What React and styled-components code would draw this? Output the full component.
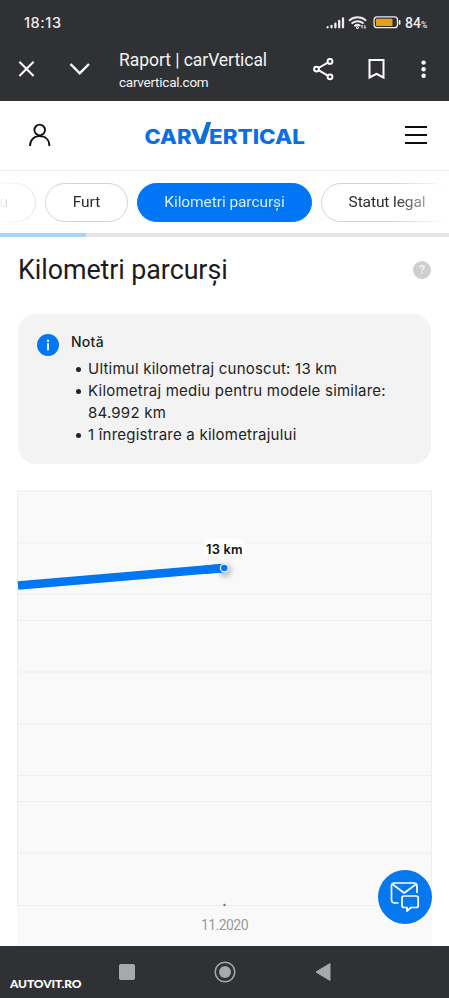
import React from "react";
import styled, { createGlobalStyle } from "styled-components";

const GlobalStyle = createGlobalStyle`
  * {
    box-sizing: border-box;
  }

  body {
    margin: 0;
    background: #fff;
    overflow: hidden;
  }
`;

// Styled components
const Screen = styled.div`
  display: flex;
  flex-direction: column;
  width: 449px;
  height: 998px;
  overflow: hidden;
  background: #fff;
  font-family: Roboto, "Liberation Sans", sans-serif;
`;

const StatusBar = styled.div`
  display: flex;
  align-items: center;
  height: 45px;
  flex-shrink: 0;
  padding: 0 20px 0 24px;
  background: #303135;
  color: #ededef;
`;

const Clock = styled.span`
  flex: 1;
  font-family: Inter, sans-serif;
  font-size: 14.5px;
  font-weight: 500;
  letter-spacing: 0.6px;
`;

const BatteryLevel = styled.span`
  width: 24px;
  margin-left: 4px;
  font-size: 14px;
  font-weight: 500;
  white-space: nowrap;

  small {
    font-size: 8.5px;
  }
`;

const BrowserBar = styled.div`
  display: flex;
  align-items: center;
  height: 56px;
  flex-shrink: 0;
  padding: 0 22px 8px 18px;
  background: #303135;
  color: #fff;
`;

const PageTitle = styled.div`
  flex: 1;
  margin: 4px 0 0 28px;
  white-space: nowrap;
`;

const TitleText = styled.div`
  font-size: 17.5px;
  line-height: 21px;
  letter-spacing: -0.05px;
  color: #f4f4f5;
`;

const UrlText = styled.div`
  font-size: 13.5px;
  line-height: 22px;
  letter-spacing: -0.25px;
  color: #f4f4f5;
`;

const BrowserActions = styled.div`
  display: flex;
  align-items: center;
`;

const SiteHeader = styled.header`
  display: flex;
  align-items: center;
  justify-content: space-between;
  height: 70px;
  flex-shrink: 0;
  padding: 0 22px 2px 27px;
  border-bottom: 1px solid #eeeeee;
`;

const Logo = styled.svg`
  margin: 0 7px 2px 0;
  font-family: Inter, sans-serif;
  font-size: 20px;
  font-weight: 800;
  fill: #0b6fe0;
`;

const Tabs = styled.nav`
  display: flex;
  gap: 9px;
  height: 62px;
  flex-shrink: 0;
  padding-top: 12px;
  overflow: hidden;
  mask-image: linear-gradient(
    90deg,
    rgba(0, 0, 0, 0.05),
    #000 54px,
    #000 394px,
    transparent 449px
  );
`;

const Tab = styled.div`
  display: flex;
  align-items: center;
  justify-content: ${(props) => (props.$clipped ? "flex-end" : "center")};
  width: ${(props) => props.$width}px;
  height: 39px;
  flex-shrink: 0;
  margin-left: ${(props) => (props.$clipped ? "-64px" : "0")};
  padding: 0 27px 1px;
  border: 1px solid ${(props) => (props.$active ? "#0076f6" : "#d4d4d6")};
  border-radius: 20px;
  background: ${(props) => (props.$active ? "#0076f6" : "#fff")};
  color: ${(props) => (props.$active ? "#d8ecff" : "#2c2c2c")};
  font-size: 15.5px;
  font-weight: 400;
  letter-spacing: ${(props) => props.$spacing || 0}px;
  white-space: nowrap;
`;

const ProgressTrack = styled.div`
  height: 4px;
  flex-shrink: 0;
  background: #e4e4e4;
`;

const ProgressFill = styled.div`
  width: 86px;
  height: 100%;
  background: #a6d5fb;
`;

const Content = styled.main`
  flex: 1;
  min-height: 0;
  padding: 0 18px 0 17px;
  overflow: hidden;
`;

const HeadingRow = styled.div`
  display: flex;
  align-items: center;
  justify-content: space-between;
  height: 65px;
`;

const Heading = styled.h1`
  margin: 1px 0 0 1px;
  font-size: 26.8px;
  font-weight: 400;
  line-height: 32px;
  letter-spacing: -0.05px;
  color: #1b1b1d;
`;

const HelpBadge = styled.span`
  display: flex;
  align-items: center;
  justify-content: center;
  width: 18px;
  height: 18px;
  border-radius: 50%;
  background: #cfcfcf;
  color: #f3f3f3;
  font-size: 13px;
  font-weight: 500;
`;

const NoteCard = styled.section`
  display: flex;
  height: 150px;
  margin: 12px 0 0 1px;
  padding: 17px 20px 17px 19px;
  border-radius: 18px;
  background: #f3f3f3;
  font-family: Inter, sans-serif;
  color: #222225;
`;

const NoteBody = styled.div`
  margin-left: 12px;
  white-space: nowrap;
`;

const NoteTitle = styled.div`
  font-size: 14px;
  font-weight: 500;
  line-height: 22px;
  letter-spacing: 0.25px;
`;

const NoteList = styled.ul`
  margin: 5px 0 0;
  padding-left: 17px;
  list-style: none;
  font-size: 15px;
  line-height: 22px;
  letter-spacing: 0.22px;
`;

const NoteItem = styled.li`
  position: relative;

  &::before {
    content: '';
    position: absolute;
    left: -12px;
    top: 9px;
    width: 5px;
    height: 5px;
    border-radius: 50%;
    background: #222225;
  }
`;

const InfoIcon = styled.svg`
  margin-top: 3px;
  flex-shrink: 0;
`;

const Chart = styled.svg`
  display: block;
  margin-top: 26px;
`;

const NavBar = styled.footer`
  position: relative;
  display: flex;
  align-items: center;
  justify-content: center;
  gap: 79px;
  height: 52px;
  flex-shrink: 0;
  background: #303135;
`;

const Watermark = styled.span`
  position: absolute;
  left: 10px;
  bottom: 7px;
  font-family: Lato, sans-serif;
  font-size: 12px;
  font-weight: 900;
  line-height: 15px;
  letter-spacing: -0.1px;
  color: #fff;
`;

const ChatButton = styled.button`
  position: absolute;
  left: 378px;
  top: 870px;
  display: flex;
  align-items: center;
  justify-content: center;
  width: 54px;
  height: 54px;
  padding: 0;
  border: 0;
  border-radius: 50%;
  background: #0678ee;
`;

const tabs = [
  { label: "u", width: 100, clipped: true },
  { label: "Furt", width: 83 },
  { label: "Kilometri parcurși", width: 175, active: true, spacing: -0.08 },
  { label: "Statut legal", width: 132, spacing: -0.1 },
];

const notes = [
  { text: "Ultimul kilometraj cunoscut: 13 km" },
  { text: "Kilometraj mediu pentru modele similare:", more: "84.992 km" },
  { text: "1 înregistrare a kilometrajului" },
];

// Grid line offsets from the top of the chart
const gridLines = [1, 53, 104.5, 130.5, 182, 234, 285.5, 311.5, 363, 415.5];

const StatusIcons = () => (
  <svg width="78" height="18" viewBox="0 0 78 18" fill="none">
    <g stroke="#ededef" strokeWidth="2.3" strokeLinecap="round">
      <path d="M4.6 13.3v-.2M8.5 13.3v-1.4M12.4 13.3v-3.6M16.2 13.3V7M20 13.3V4.5" />
    </g>
    <g stroke="#ededef" strokeWidth="2" strokeLinecap="round">
      <path d="M26.6 6.2a12.3 12.3 0 0 1 16 0M29.3 9.1a8.2 8.2 0 0 1 10.6 0M31.9 11.7a4.2 4.2 0 0 1 4.7-.4" />
      <circle cx="34.4" cy="13.6" r="0.5" />
    </g>
    <path d="M39 14.5v-3.2M37.9 12.4l1.1-1.2 1.1 1.2M41.9 11v3.3M40.8 13.2l1.1 1.2 1.1-1.2" stroke="#ededef" strokeWidth="0.9" />
    <rect x="51.1" y="2.9" width="23.4" height="10.8" rx="3" stroke="#ededef" strokeWidth="1.3" />
    <rect x="53" y="4.7" width="16.5" height="7.2" rx="1" fill="#e6a01c" />
    <path d="M76.6 6.9v3" stroke="#ededef" strokeWidth="1.7" strokeLinecap="round" />
  </svg>
);

const CloseIcon = () => (
  <svg width="18" height="18" viewBox="0 0 18 18" fill="none" stroke="#fff" strokeWidth="2">
    <path d="M1.4 1.8l14.2 14.2M15.6 1.8l-14.2 14.2" />
  </svg>
);

const ChevronIcon = styled.svg`
  margin-left: 33px;
`;

const ShareIcon = () => (
  <svg width="22" height="24" viewBox="0 0 22 24" fill="none" stroke="#fff" strokeWidth="2">
    <path d="M5.5 11L15.2 5.4M5.5 13.2l9.7 5.6" />
    <circle cx="3.5" cy="12.1" r="2.4" />
    <circle cx="17" cy="4.4" r="2.4" />
    <circle cx="17" cy="19.8" r="2.4" />
  </svg>
);

const BookmarkIcon = styled.svg`
  margin-left: 33px;
`;

const MoreIcon = styled.svg`
  margin-left: 36px;
`;

const MileageChart = () => (
  <Chart width="416" height="456" viewBox="0 0 416 456">
    <rect width="415" height="456" fill="#f9f9f9" />
    <g stroke="#efefef" strokeWidth="1.2">
      {gridLines.map((y) => (
        <path key={y} d={`M0 ${y}H415`} />
      ))}
      <path d="M.6 0V415M414.5 0V415" />
    </g>
    <defs>
      <filter id="pointShadow" x="-150%" y="-150%" width="400%" height="400%">
        <feGaussianBlur stdDeviation="2.5" />
      </filter>
      <filter id="labelGlow" x="-30%" y="-50%" width="160%" height="200%">
        <feGaussianBlur stdDeviation="1" />
      </filter>
    </defs>
    <path d="M1 95.5L207 78" stroke="#0076f0" strokeWidth="8.4" />
    <circle cx="208" cy="80.5" r="6.5" fill="#999" opacity="0.6" filter="url(#pointShadow)" />
    <path d="M187 79.7L207 78" stroke="#0076f0" strokeWidth="8.4" />
    <circle cx="207.3" cy="78" r="3.9" fill="#0076f0" stroke="#fff" strokeWidth="1.2" />
    <rect x="186" y="49" width="43" height="19" rx="8" fill="#fff" filter="url(#labelGlow)" />
    <text x="189" y="64" textLength="36.5" fontFamily="Inter, sans-serif" fontSize="12.8" fontWeight="600" fill="#111">
      13 km
    </text>
    <circle cx="207.5" cy="415" r="1.2" fill="#777" />
    <text x="184" y="440" textLength="47.5" fontFamily="Roboto, sans-serif" fontSize="14" fill="#999">
      11.2020
    </text>
  </Chart>
);

const App = () => {
  return (
    <Screen>
      <GlobalStyle />
      <StatusBar>
        <Clock>18:13</Clock>
        <StatusIcons />
        <BatteryLevel>
          84<small>%</small>
        </BatteryLevel>
      </StatusBar>

      <BrowserBar>
        <CloseIcon />
        <ChevronIcon width="22" height="14" viewBox="0 0 22 14" fill="none" stroke="#fff" strokeWidth="2.4">
          <path d="M1.5 2l9.2 9.3L20 2" />
        </ChevronIcon>
        <PageTitle>
          <TitleText>Raport | carVertical</TitleText>
          <UrlText>carvertical.com</UrlText>
        </PageTitle>
        <BrowserActions>
          <ShareIcon />
          <BookmarkIcon width="17" height="22" viewBox="0 0 17 22" fill="none" stroke="#fff" strokeWidth="2">
            <path d="M1.5 2h14v17.5l-7-3.7-7 3.7z" />
          </BookmarkIcon>
          <MoreIcon width="6" height="20" viewBox="0 0 6 20" fill="#fff">
            <circle cx="2.6" cy="3.6" r="2.2" />
            <circle cx="2.6" cy="10.2" r="2.2" />
            <circle cx="2.6" cy="16.8" r="2.2" />
          </MoreIcon>
        </BrowserActions>
      </BrowserBar>

      <SiteHeader>
        <svg width="25" height="26" viewBox="0 0 25 26" fill="none" stroke="#0c0c0c" strokeWidth="1.8">
          <circle cx="12.7" cy="8" r="5.3" />
          <path d="M3 24c0-6.2 4-9.8 9.7-9.8s9.7 3.6 9.7 9.8" />
        </svg>
        <Logo width="162" height="26" viewBox="0 0 162 26">
          <text x="0.5" y="22.5" textLength="47" lengthAdjust="spacingAndGlyphs">CAR</text>
          <text x="46.5" y="22.5" textLength="19" lengthAdjust="spacingAndGlyphs">V</text>
          <text x="65" y="22.5" textLength="96" lengthAdjust="spacingAndGlyphs">ERTICAL</text>
          {/* long right arm of the V */}
          <path d="M62.5 1H67.2L60.5 22.5H55z" />
        </Logo>
        <svg width="22" height="20" viewBox="0 0 22 20" stroke="#0c0c0c" strokeWidth="1.8">
          <path d="M0 2h22M0 10h22M0 18h22" />
        </svg>
      </SiteHeader>

      <Tabs>
        {tabs.map((tab) => (
          <Tab
            key={tab.label}
            $width={tab.width}
            $active={tab.active}
            $clipped={tab.clipped}
            $spacing={tab.spacing}
          >
            {tab.label}
          </Tab>
        ))}
      </Tabs>
      <ProgressTrack>
        <ProgressFill />
      </ProgressTrack>

      <Content>
        <HeadingRow>
          <Heading>Kilometri parcurși</Heading>
          <HelpBadge>?</HelpBadge>
        </HeadingRow>

        <NoteCard>
          <InfoIcon width="22" height="22" viewBox="0 0 22 22">
            <circle cx="11" cy="11" r="11" fill="#0078f5" />
            <circle cx="11" cy="6.7" r="1.2" fill="#fff" />
            <path d="M11 9.3v7" stroke="#fff" strokeWidth="2" />
          </InfoIcon>
          <NoteBody>
            <NoteTitle>Notă</NoteTitle>
            <NoteList>
              {notes.map((note) => (
                <NoteItem key={note.text}>
                  {note.text}
                  {note.more && <div>{note.more}</div>}
                </NoteItem>
              ))}
            </NoteList>
          </NoteBody>
        </NoteCard>

        <MileageChart />
      </Content>

      <NavBar>
        <svg width="16" height="16" viewBox="0 0 16 16">
          <rect width="16" height="16" rx="2" fill="#a8a9ac" />
        </svg>
        <svg width="22" height="22" viewBox="0 0 22 22">
          <circle cx="11" cy="11" r="9.8" fill="none" stroke="#a8a9ac" strokeWidth="1.5" />
          <circle cx="11" cy="11" r="6" fill="#a8a9ac" />
        </svg>
        <svg width="16" height="20" viewBox="0 0 16 20">
          <path d="M15 1.5v17L1 10z" fill="#a8a9ac" stroke="#a8a9ac" strokeLinejoin="round" />
        </svg>
        <Watermark>AUTOVIT.RO</Watermark>
      </NavBar>

      <ChatButton aria-label="Chat">
        <svg width="30" height="32" viewBox="0 0 30 32" fill="none" stroke="#fff" strokeWidth="1.7" strokeLinejoin="round">
          <path d="M8.5 22H4.5a3 3 0 0 1-3-3V5a3 3 0 0 1 3-3H24a3 3 0 0 1 3 3v7" />
          <path d="M2.5 3.2L14.2 12 26 3.2" />
          <path d="M14 15h12.2a2 2 0 0 1 2 2v7.5a2 2 0 0 1-2 2H21l-4 3.5v-3.5h-3a2 2 0 0 1-2-2V17a2 2 0 0 1 2-2z" />
        </svg>
      </ChatButton>
    </Screen>
  );
};

export default App;
